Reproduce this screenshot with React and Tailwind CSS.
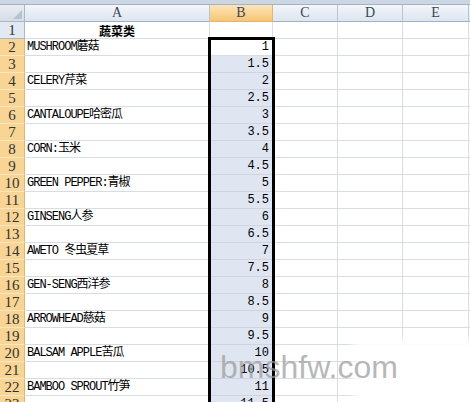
import React from "react";

const names = {
  2: "MUSHROOM蘑菇",
  4: "CELERY芹菜",
  6: "CANTALOUPE哈密瓜",
  8: "CORN:玉米",
  10: "GREEN PEPPER:青椒",
  12: "GINSENG人参",
  14: "AWETO 冬虫夏草",
  16: "GEN-SENG西洋参",
  18: "ARROWHEAD慈菇",
  20: "BALSAM APPLE苦瓜",
  22: "BAMBOO SPROUT竹笋",
};

function fmt(n) {
  return Number.isInteger(n) ? String(n) : n.toFixed(1);
}

export default function App() {
  const rows = [];
  for (let r = 2; r <= 24; r++) rows.push(r);
  return (
    <div className="relative w-[470px] h-[402px] overflow-hidden bg-white font-['Liberation_Mono','Noto_Sans_CJK_SC',monospace] text-[12px] text-black">
      {/* top bar */}
      <div className="h-[5px] bg-[#cdd7e3] border-b border-[#a3b3c6]" />
      {/* column header */}
      <div className="flex h-[17px] font-['Liberation_Serif','Noto_Sans_CJK_SC',serif] text-[14px] leading-none text-[#3a4658]">
        <div className="relative w-[25px] shrink-0 border-r border-b border-[#a9b8ca] bg-gradient-to-b from-[#e9edf2] to-[#d6dde6]">
          <svg className="absolute right-[2px] bottom-[2px]" width="9" height="9" viewBox="0 0 9 9">
            <polygon points="9,0 9,9 0,9" fill="#b7c2cf" />
          </svg>
        </div>
        <div className="w-[185px] shrink-0 flex items-center justify-center border-r border-b border-[#b8c5d5] border-b-[#9fb1c6] bg-gradient-to-b from-[#f3f6fa] to-[#dde5ef]">A</div>
        <div className="w-[63px] shrink-0 flex items-center justify-center border-r border-b border-[#e6b56a] bg-gradient-to-b from-[#fce5b8] to-[#f6c574]">B</div>
        <div className="w-[65px] shrink-0 flex items-center justify-center border-r border-b border-[#b8c5d5] border-b-[#9fb1c6] bg-gradient-to-b from-[#f3f6fa] to-[#dde5ef]">C</div>
        <div className="w-[65px] shrink-0 flex items-center justify-center border-r border-b border-[#b8c5d5] border-b-[#9fb1c6] bg-gradient-to-b from-[#f3f6fa] to-[#dde5ef]">D</div>
        <div className="w-[66px] shrink-0 flex items-center justify-center border-r border-b border-[#b8c5d5] border-b-[#9fb1c6] bg-gradient-to-b from-[#f3f6fa] to-[#dde5ef]">E</div>
        <div className="flex-1 border-b border-[#9fb1c6] bg-gradient-to-b from-[#f3f6fa] to-[#dde5ef]" />
      </div>
      {/* row 1 */}
      <div className="flex h-[17px]">
        <div className="w-[25px] shrink-0 flex items-center justify-center border-r border-b border-[#a9b8ca] bg-[#e3e9f2] font-['Liberation_Serif',serif] text-[15px] leading-none text-[#333]">1</div>
        <div className="w-[185px] shrink-0 flex items-end justify-center border-r border-b border-[#d8dde5] font-bold font-['Noto_Sans_CJK_SC',sans-serif] text-[12px] leading-none pb-[1px]">蔬菜类</div>
        <div className="w-[63px] shrink-0 border-r border-b border-[#d8dde5]" />
        <div className="w-[65px] shrink-0 border-r border-b border-[#d8dde5]" />
        <div className="w-[65px] shrink-0 border-r border-b border-[#d8dde5]" />
        <div className="w-[66px] shrink-0 border-r border-b border-[#d8dde5]" />
        <div className="flex-1 border-b border-[#d8dde5]" />
      </div>
      {rows.map((r) => (
        <div key={r} className="flex h-[17px]">
          <div className="w-[25px] shrink-0 flex items-center justify-center border-r border-b border-r-[#e2b46c] border-b-[#fbe6c2] bg-[#f8d594] font-['Liberation_Serif',serif] text-[15px] leading-none text-[#333]">
            {r}
          </div>
          <div className="w-[185px] shrink-0 flex items-end pl-[2px] pb-[2px] border-r border-b border-[#d8dde5] leading-none tracking-[-1px] whitespace-nowrap overflow-hidden">
            {names[r] || ""}
          </div>
          <div
            className={
              r === 2
                ? "w-[63px] shrink-0 flex items-end justify-end pr-[3px] pb-[2px] border-r border-b border-[#d8dde5] bg-white leading-none"
                : "w-[63px] shrink-0 flex items-end justify-end pr-[3px] pb-[2px] border-r border-b border-[#cdd5e2] bg-[#dfe6f2] leading-none"
            }
          >
            {r <= 23 ? fmt(r / 2) : ""}
          </div>
          <div className="w-[65px] shrink-0 border-r border-b border-[#d8dde5]" />
          <div className="w-[65px] shrink-0 border-r border-b border-[#d8dde5]" />
          <div className="w-[66px] shrink-0 border-r border-b border-[#d8dde5]" />
          <div className="flex-1 border-b border-[#d8dde5]" />
        </div>
      ))}
      {/* selection outline */}
      <div className="absolute left-[208px] top-[37px] w-[67px] h-[400px] border-[3px] border-black" />
      {/* watermark fade */}
      <div className="absolute left-[360px] top-[345px] w-[120px] h-[70px] bg-white shadow-[0_0_8px_6px_#ffffff]" />
      {/* watermark text */}
      <div className="absolute left-[220px] top-[351px] font-['Liberation_Sans',sans-serif] text-[32px] leading-none text-[#9a9a9a] opacity-70">
        bmshfw.com
      </div>
    </div>
  );
}
